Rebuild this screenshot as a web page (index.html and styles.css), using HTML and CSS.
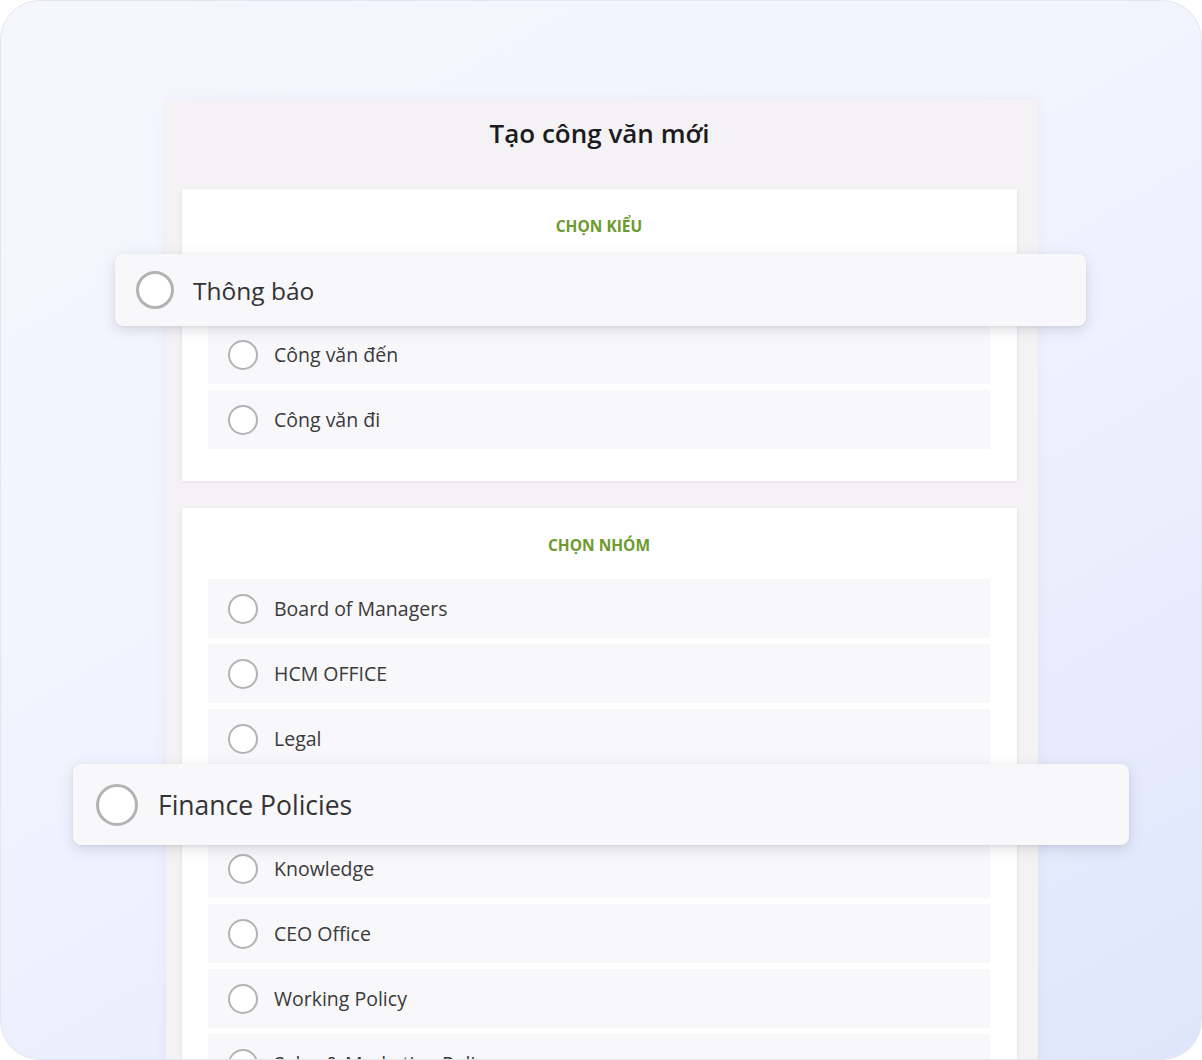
FILE: index.html
```html
<!DOCTYPE html>
<html lang="vi">
<head>
<meta charset="utf-8">
<title>Tạo công văn mới</title>
<link rel="stylesheet" href="styles.css">
</head>
<body>
<div class="frame">
  <div class="panel">
    <h1 class="title">Tạo công văn mới</h1>
    <section class="card card-type">
      <div class="label">CHỌN KIỂU</div>
      <ul class="options">
        <li class="option placeholder"><span class="radio"></span><span class="opt-text">Thông báo</span></li>
        <li class="option"><span class="radio"></span><span class="opt-text">Công văn đến</span></li>
        <li class="option"><span class="radio"></span><span class="opt-text">Công văn đi</span></li>
      </ul>
    </section>
    <section class="card card-group">
      <div class="label">CHỌN NHÓM</div>
      <ul class="options">
        <li class="option"><span class="radio"></span><span class="opt-text">Board of Managers</span></li>
        <li class="option"><span class="radio"></span><span class="opt-text">HCM OFFICE</span></li>
        <li class="option"><span class="radio"></span><span class="opt-text">Legal</span></li>
        <li class="option placeholder"><span class="radio"></span><span class="opt-text">Finance Policies</span></li>
        <li class="option"><span class="radio"></span><span class="opt-text">Knowledge</span></li>
        <li class="option"><span class="radio"></span><span class="opt-text">CEO Office</span></li>
        <li class="option"><span class="radio"></span><span class="opt-text">Working Policy</span></li>
        <li class="option"><span class="radio"></span><span class="opt-text">Sales &amp; Marketing Policy</span></li>
      </ul>
    </section>
  </div>

  <div class="float float-one"><span class="radio radio-lg"></span><span class="float-text">Thông báo</span></div>
  <div class="float float-two"><span class="radio radio-xl"></span><span class="float-text float-text-xl">Finance Policies</span></div>
</div>
</body>
</html>
```

FILE: styles.css
```css
* { box-sizing: border-box; }
html, body { margin: 0; padding: 0; background: #ffffff; }
body { font-family: "Open Sans", "Noto Sans", sans-serif; }

.frame {
  position: relative;
  width: 1202px;
  height: 1060px;
  border: 1px solid #e4e5ee;
  border-radius: 40px;
  overflow: hidden;
  background: linear-gradient(150deg, #f6f7fd 0%, #f1f3fe 45%, #dfe6fc 100%);
}

.panel {
  margin: 99px 0 0 165px;
  width: 872px;
  min-height: 1000px;
  background: #f4f2f4;
  padding: 17px 21px 0 16px;
  box-shadow: 0 0 10px rgba(120, 120, 140, 0.08);
}

.title {
  margin: 0 0 40px;
  text-align: center;
  font-size: 26px;
  line-height: 32px;
  font-weight: 600;
  color: #1b1b1f;
}

.card {
  background: #ffffff;
  padding: 26px 27px 32px 26px;
  box-shadow: 0 1px 4px rgba(0, 0, 0, 0.08);
}
.card-group { margin-top: 27px; }

.label {
  text-align: center;
  font-size: 15.5px;
  line-height: 22px;
  font-weight: 700;
  color: #6d9a2e;
  margin-bottom: 23px;
}

.options {
  list-style: none;
  margin: 0;
  padding: 0;
  display: flex;
  flex-direction: column;
  gap: 6px;
}

.option {
  height: 59px;
  display: flex;
  align-items: center;
  gap: 16px;
  padding-left: 20px;
  background: #f8f7f9;
  font-size: 19.5px;
  color: #3a3a3c;
}

.placeholder > * { visibility: hidden; }

.radio {
  flex: none;
  width: 30px;
  height: 30px;
  border-radius: 50%;
  border: 2.5px solid #b3b3b5;
  background: #ffffff;
}

.float {
  position: absolute;
  display: flex;
  align-items: center;
  background: #f8f7f9;
  border-radius: 8px;
  box-shadow: 0 4px 14px rgba(60, 60, 90, 0.16), 0 1px 3px rgba(0, 0, 0, 0.06);
  color: #343436;
}

.float-one {
  left: 114px;
  top: 253px;
  width: 971px;
  height: 72px;
  padding-left: 21px;
  gap: 19px;
}

.float-two {
  left: 72px;
  top: 763px;
  width: 1056px;
  height: 81px;
  padding-left: 23px;
  gap: 20px;
}

.radio-lg { width: 38px; height: 38px; border-width: 3px; }
.radio-xl { width: 42px; height: 42px; border-width: 3px; }

.float-text { font-size: 24.5px; }
.float-text-xl { font-size: 26.5px; }
```
